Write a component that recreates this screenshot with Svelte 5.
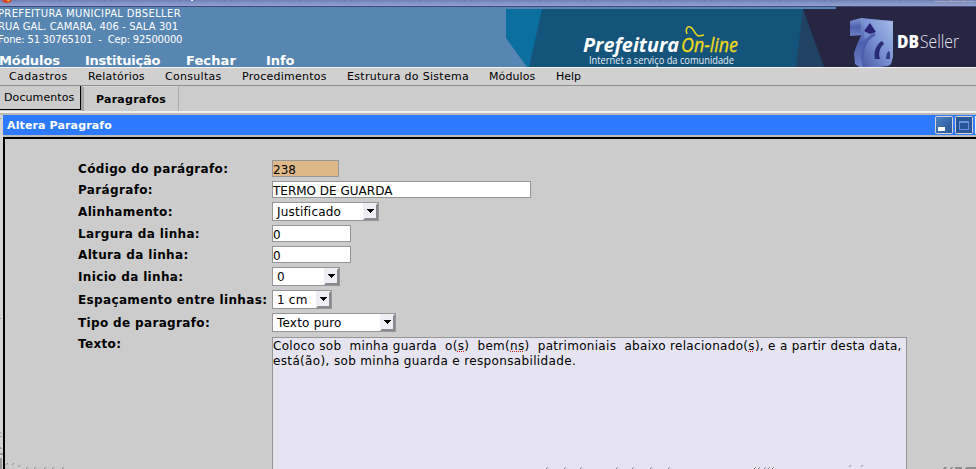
<script>
  const links = [
    { label: 'Módulos', w: 86, ls: -0.1 },
    { label: 'Instituição', w: 101, ls: -0.25 },
    { label: 'Fechar', w: 80, ls: 0.1 },
    { label: 'Info', w: 40, ls: -0.1 }
  ];
  const menu = [
    { label: 'Cadastros', w: 79, ls: 0.4 },
    { label: 'Relatórios', w: 77, ls: 0.2 },
    { label: 'Consultas', w: 77, ls: 0.3 },
    { label: 'Procedimentos', w: 105, ls: 0.25 },
    { label: 'Estrutura do Sistema', w: 142, ls: 0.3 },
    { label: 'Módulos', w: 67, ls: 0.1 },
    { label: 'Help', w: 40, ls: 0 }
  ];
  const fields = [
    { label: 'Código do parágrafo:', value: '238', w: 67, h: 17, row: 21, kind: 'code' },
    { label: 'Parágrafo:', value: 'TERMO DE GUARDA', w: 259, h: 17, row: 21, kind: 'text' },
    { label: 'Alinhamento:', value: 'Justificado', w: 107, h: 19, row: 23, kind: 'select' },
    { label: 'Largura da linha:', value: '0', w: 79, h: 17, row: 21, kind: 'text' },
    { label: 'Altura da linha:', value: '0', w: 79, h: 17, row: 21, kind: 'text' },
    { label: 'Inicio da linha:', value: '0', w: 68, h: 19, row: 23, kind: 'select' },
    { label: 'Espaçamento entre linhas:', value: '1 cm', w: 60, h: 19, row: 23, kind: 'select' },
    { label: 'Tipo de paragrafo:', value: 'Texto puro', w: 124, h: 19, row: 24, kind: 'select' }
  ];
  const bottomMarks = [[34,467],[44,467],[52,467],[62,467],[6,463],[12,463],[18,465],[26,467],[546,467],[564,467],[580,467],[616,467],[632,467],[650,467],[668,467],[754,467],[758,467],[764,467],[768,467],[772,467],[849,465],[861,465]];
</script>

<main>
  <div class="chrome">
    <svg width="976" height="7">
      <defs><linearGradient id="chrome" x1="0" x2="0" y1="0" y2="1"><stop stop-color="#7282b9" /><stop offset="1" stop-color="#91a3cf" /></linearGradient></defs>
      <rect width="976" height="6" fill="url(#chrome)" />
      <rect y="6" width="976" height="1" fill="#454578" />
      <path d="M14 .5H935" stroke="#66729c" stroke-dasharray="2 5 1 7" opacity=".6" />
      <path d="M2 0h10q-1 3-5 3T2 0" fill="#d94322" /><path d="M7 0h3l-2 2z" fill="#ffc13b" />
      <path d="M191 0h2v1h-2z" fill="#fff" />
      <path d="M935 1.500h40M951 0v1M963 0v1" stroke="#a3a6ba" fill="none" />
    </svg>
  </div>

  <header>
    <div class="left">
      <div class="org">
        <div class="o1">PREFEITURA MUNICIPAL DBSELLER</div>
        <div class="o2">RUA GAL. CAMARA, 406 - SALA 301</div>
        <div class="o3">Fone: 51 30765101&nbsp; -&nbsp; Cep: 92500000</div>
      </div>
      <nav class="links">
        {#each links as l}<span style="width:{l.w}px;letter-spacing:{l.ls}px">{l.label}</span>{/each}
      </nav>
    </div>
    <svg class="banner" width="470" height="60" viewBox="506 7 470 60">
      <defs>
        <linearGradient id="cube" x1="0" y1="0" x2="0" y2="1"><stop stop-color="#7f97d6" /><stop offset=".5" stop-color="#4f60ad" /><stop offset="1" stop-color="#6c80c6" /></linearGradient>
        <linearGradient id="face" x1="0" y1="1" x2="1" y2="0"><stop stop-color="#4a5aa6" /><stop offset=".5" stop-color="#7890d2" /><stop offset="1" stop-color="#a5bbe8" /></linearGradient>
      </defs>
      <rect x="506" y="9" width="330" height="58" fill="#14547b" />
      <path d="M506 9h36l-13 58h-2l-21-29z" fill="#0b70a0" />
      <path d="M506 38v29h21z" fill="#5886b2" />
      <path d="M803 9l21 58h-28z" fill="#214263" />
      <path d="M803 9h33V7h140v60H824z" fill="#262542" />
      <text x="583" y="52" class="pref" textLength="96" lengthAdjust="spacingAndGlyphs">Prefeitura</text>
      <text x="681" y="52" class="online" textLength="57" lengthAdjust="spacingAndGlyphs">On-line</text>
      <path d="M687 34c-2-4 0-8 3-7 4 1 5 9 9 9l5-1" fill="none" stroke="#efda17" stroke-width="1.5" />
      <text x="589" y="64" class="tag" textLength="145" lengthAdjust="spacingAndGlyphs">Internet a serviço da comunidade</text>
      <path d="M850 21l11-3 5 2-2 15-14 1z" fill="url(#cube)" />
      <path d="M861 18l32 3-1 38-4 7-26 3-7-5-1-11c2-7 5-13 7-17z" fill="url(#cube)" />
      <path d="M864 20l29 1v36l-2 7-3 2-25 1c-3-8-1-17 5-25l-4-5z" fill="url(#face)" />
      <path d="M870 23l6 9-6 2-6-3z" fill="#292272" />
      <path d="M863 60c-2-10 2-21 12-26" stroke="#4d5fae" stroke-width="3" fill="none" />
      <path d="M875 59c-2-8 2-15 7-18l2 3c-4 3-6 9-4 15z" fill="#292c72" />
      <path d="M886 59c0-4 1-7 3-8l1 2v6z" fill="#343c88" />
      <text x="897" y="48" class="db" textLength="22" lengthAdjust="spacingAndGlyphs">DB</text>
      <text x="920" y="48" class="seller" textLength="39" lengthAdjust="spacingAndGlyphs">Seller</text>
    </svg>
  </header>

  <nav class="menu">
    {#each menu as m}<span style="width:{m.w}px;letter-spacing:{m.ls}px">{m.label}</span>{/each}
  </nav>

  <div class="tabs">
    <div class="tab docs">Documentos</div>
    <div class="tab current">Paragrafos</div>
  </div>

  <section class="window">
    <div class="titlebar">
      <b>Altera Paragrafo</b>
      <svg width="41" height="20">
        <defs><linearGradient id="btn" x1="0" y1="0" x2="1" y2="1"><stop stop-color="#4c82c5" /><stop offset="1" stop-color="#285493" /></linearGradient></defs>
        <rect x=".5" y="1.5" width="17" height="17" rx="1" fill="url(#btn)" stroke="#d8d4d0" />
        <rect x="3" y="12" width="7" height="4" fill="#fff" />
        <rect x="20.500" y="1.500" width="17" height="17" rx="1" fill="#2a5598" stroke="#d8d4d0" />
        <rect x="24.500" y="6.500" width="9" height="8" fill="none" stroke="#6394dc" />
        <path d="M24 7h10" stroke="#6394dc" stroke-width="2" />
        <rect x="40" y="1" width="1" height="18" fill="#eee" />
      </svg>
    </div>
    <div class="body">
      <form>
        {#each fields as f}
          <div class="row" style="height:{f.row}px">
            <div class="label" class:low={f.kind === 'select'}>{f.label}</div>
            <div class="control {f.kind}" style="width:{f.w}px;height:{f.h}px">
              <span>{f.value}</span>
              {#if f.kind === 'select'}
                <svg width="15" height="17">
                  <rect width="15" height="17" fill="#eeeef5" />
                  <path d="M15 0v17H0l2-2h11V2z" fill="#88888e" />
                  <path d="M4 6h7v1h-1v1H9v1H8v1H7V9H6V8H5V7H4z" fill="#000" />
                </svg>
              {/if}
            </div>
          </div>
        {/each}
        <div class="row area">
          <div class="label">Texto:</div>
          <div class="textarea"><div class="t1">Coloco sob  minha guarda  o(<u>s</u>)  bem(<u>ns</u>)  patrimoniais  abaixo relacionado(<u>s</u>), e a partir desta data,</div><div class="t2">está(ão), sob minha guarda e responsabilidade.</div></div>
        </div>
      </form>
    </div>
  </section>

  <svg class="specks" width="976" height="469">
    {#each bottomMarks as [x, y]}<path d="M{x} {y + 2}v-1h1v-1h1v1h-1v1z" fill="#8b8b90" />{/each}
    <path d="M943 469v-1h1v-1h3v1h-1v1zm7 0v-1h1v-1h2v1h-1v1zm4-1h1v-1h7v2h-6zm11 1v-1h1v-1h10v2z" fill="#8d8d8d" />
    <path d="M0 118h1v1H0zm0 200h1v1H0zm0 114h1v1h1v1H1v-1H0zm0 4h2v1H0zm0 11h1v1h1v1H0zm0 6h3v2H0zm0 5h2v11H0z" fill="#999" />
  </svg>
</main>

<style>
  :global(body) { margin: 0; overflow: hidden; }
  main { position: relative; width: 976px; height: 469px; overflow: hidden; background: #ccc; font: 12px "DejaVu Sans", sans-serif; color: #000; white-space: nowrap; }
  svg { display: block; }
  .chrome { height: 7px; }
  header { display: flex; height: 60px; background: #5886b2; border-bottom: 1px solid #f2f2f2; overflow: hidden; color: #fff; }
  .left { width: 506px; flex: none; overflow: hidden; }
  .org { height: 45px; margin-left: -2px; font-size: 10px; line-height: 13px; }
  .o1 { letter-spacing: .34px; }
  .o2 { letter-spacing: .1px; }
  .o3 { letter-spacing: -.18px; }
  .links { display: flex; margin-left: -1px; font: bold 13px/17px "DejaVu Sans", sans-serif; }
  .links span { flex: none; }
  .pref { font: italic bold 19px "Open Sans", sans-serif; fill: #fff; }
  .online { font: italic 20px "Open Sans", sans-serif; fill: #efda17; stroke: #efda17; stroke-width: .3px; }
  .tag { font: 10px "Open Sans", sans-serif; fill: #e6eef6; }
  .db { font: 800 18px "Open Sans", sans-serif; fill: #fff; }
  .seller { font: 300 18px "Open Sans", sans-serif; fill: #e6e6f2; }
  .menu { display: flex; height: 17px; padding-left: 9px; background: #d0d0d0; border-bottom: 1px solid #909090; font-size: 11px; line-height: 17px; }
  .menu span { flex: none; }
  .tabs { display: flex; height: 25px; border-bottom: 2px solid #f0f0f0; }
  .tab { box-sizing: border-box; font-size: 11px; }
  .docs { width: 81px; height: 24px; padding-left: 4px; line-height: 24px; border-right: 1px solid #000; border-bottom: 1px solid #000; letter-spacing: .1px; }
  .current { width: 98px; height: 25px; padding-left: 12px; line-height: 25px; border-left: 3px solid #a6a6a6; border-right: 1px solid #aaa; border-top: 1px solid #d9d9d9; font-weight: bold; letter-spacing: .25px; }
  .window { border-top: 2px solid #b8b8b8; height: 354px; padding-left: 3px; background: #d4d4d4; }
  .titlebar { display: flex; justify-content: space-between; height: 20px; background: #2d7aff; border-bottom: 2px solid #bcbcbc; color: #fff; font-size: 11px; line-height: 21px; padding-left: 4px; letter-spacing: .13px; }
  .body { height: 330px; border-top: 2px solid #000; border-left: 2px solid #000; background: #ccc; }
  form { padding: 21px 0 0 73px; }
  .row { display: flex; }
  .label { width: 194px; flex: none; font-weight: bold; line-height: 18px; letter-spacing: .35px; }
  .label.low { line-height: 20px; }
  .control { box-sizing: border-box; display: flex; justify-content: space-between; background: #fff; border: 1px solid #969696; line-height: 18px; }
  .code { background: #deb887; }
  .select span { padding-left: 4px; line-height: 18px; letter-spacing: .2px; }
  .select svg { flex: none; }
  .textarea { box-sizing: border-box; width: 635px; height: 140px; background: #e6e4f0; border: 1px solid #969696; border-bottom: 0; line-height: 15px; white-space: pre; padding-top: 1px; }
  .t1 { letter-spacing: .3px; }
  .t2 { letter-spacing: .35px; }
  .area .label { line-height: 15px; }
  u { text-decoration: underline dotted #c22; text-decoration-thickness: 1px; text-underline-offset: 1px; }
  .specks { position: absolute; inset: 0; pointer-events: none; }
</style>
